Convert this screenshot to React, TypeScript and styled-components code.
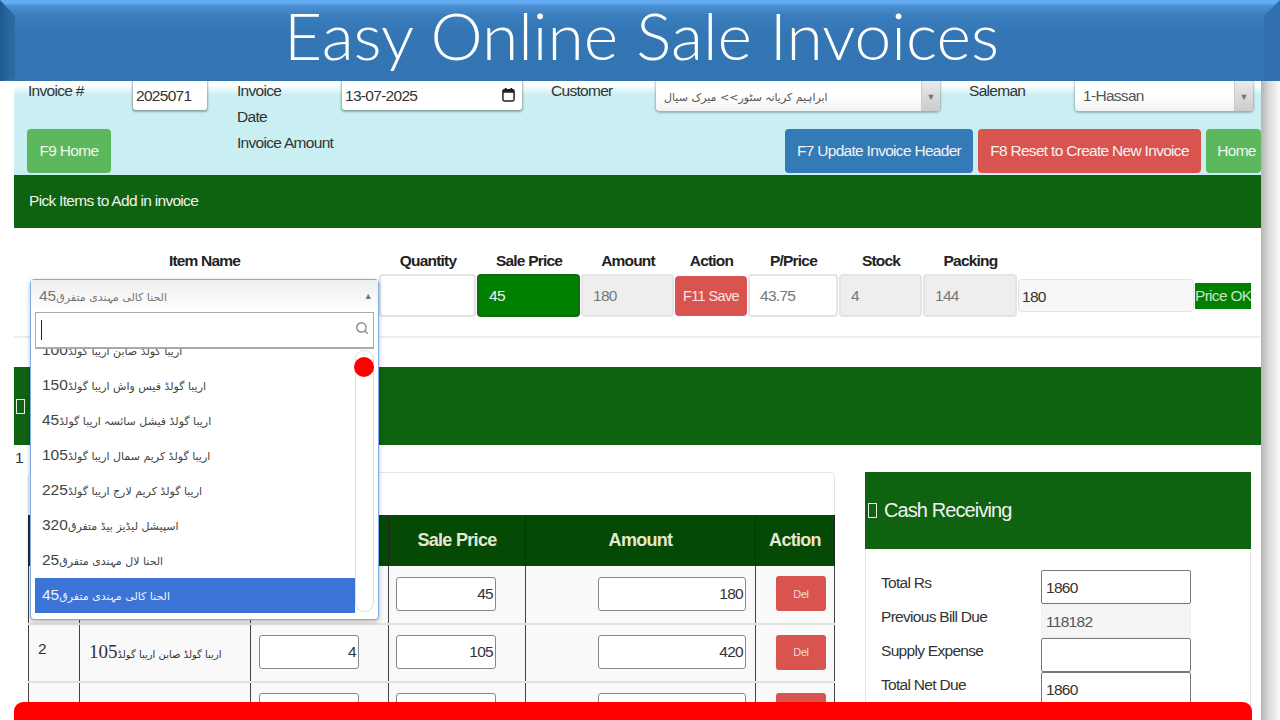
import { Search } from "lucide-react";
import { styled, createGlobalStyle } from "styled-components";

const GlobalStyle = createGlobalStyle`
  html, body {
    margin: 0;
    padding: 0;
    height: 100%;
    overflow: hidden;
    background: white;
  }
  body {
    font-family: "Liberation Sans", "DejaVu Sans", sans-serif;
    font-size: 15.5px;
    letter-spacing: -0.7px;
    color: #333;
  }
  * {
    box-sizing: border-box;
  }
`;

const Screen = styled.div`
  position: relative;
  width: 1280px;
  height: 720px;
  overflow: hidden;
`;

const Banner = styled.header`
  position: relative;
  z-index: 3;
  height: 81px;
  display: flex;
  align-items: center;
  justify-content: center;
  color: white;
  font-family: Lato, "Open Sans", sans-serif;
  font-weight: 300;
  font-size: 66px;
  line-height: 1;
  letter-spacing: 0;
  padding: 0 0 12px 3px;
  background: linear-gradient(#64aef6 0, #62abf2 3px, #4a90d2 6px, #3a7dbd 16px, #3476b4 34px, #3375b3 100%);

  &::before {
    content: "";
    position: absolute;
    left: 0;
    top: 0;
    bottom: 0;
    width: 15px;
    clip-path: polygon(0 0, 100% 16px, 100% calc(100% - 2px), 0 100%);
    background: linear-gradient(90deg, #1d5a94, #28679f 60%, #2c6ca6);
  }

  &::after {
    content: "";
    position: absolute;
    right: 0;
    top: 0;
    bottom: 0;
    width: 16px;
    clip-path: polygon(100% 0, 0 16px, 0 100%, 100% 100%);
    background: #3070ae;
  }
`;

const Shell = styled.div`
  display: flex;
  margin-top: -4px;
  margin-left: 14px;
`;

const Page = styled.main`
  width: 1247px;
  flex: none;
  overflow: hidden;
`;

const Gutter = styled.div`
  width: 19px;
  height: 650px;
  background: linear-gradient(90deg, #b4b4b4, #d8d8d8 40%, #fbfbfb);
`;

const HeaderForm = styled.section`
  display: grid;
  grid-template-columns: 105px 104px 105px 209px 105px 313px 106px 1fr;
  grid-template-rows: 52px 44px;
  height: 98px;
  padding-left: 14px;
  background: linear-gradient(#fff 5px, #fff 8px, #c9eff3 18px);
`;

const FieldLabel = styled.label`
  line-height: 26px;
  padding-top: 1px;
`;

const AmountLabel = styled(FieldLabel)`
  grid-column: 3;
`;

const TextBox = styled.div<{ $width?: number }>`
  width: ${(props) => (props.$width ? `${props.$width}px` : "100%")};
  height: 33px;
  padding: 7px 3px 0;
  background: white;
  border-radius: 3px;
  box-shadow: 0 1px 2px 1px rgba(0, 0, 0, 0.3);
  display: flex;
  justify-content: space-between;
  line-height: 24px;
`;

const CalendarMark = styled.svg`
  width: 13px;
  height: 15px;
  margin: 3px 4px 0 0;
`;

const SelectBox = styled.div<{ $width: number }>`
  width: ${(props) => props.$width}px;
  height: 34px;
  display: flex;
  background: linear-gradient(#fff 60%, #f1f1f1);
  border-radius: 4px;
  box-shadow: 0 1px 2px 1px rgba(0, 0, 0, 0.25);
  overflow: hidden;
  line-height: 38px;
`;

const SelectValue = styled.div`
  flex: 1;
  padding-left: 8px;
  color: #555;
`;

const SelectArrow = styled.div`
  width: 19px;
  display: flex;
  align-items: center;
  justify-content: center;
  padding-top: 6px;
  background: linear-gradient(#eee, #ccc);
  border-left: 1px solid #ccc;
  color: #777;
  font-size: 9px;
  letter-spacing: 0;
`;

const UrduText = styled.span`
  font-family: "DejaVu Sans", sans-serif;
  letter-spacing: 0;
  font-size: 11px;
`;

const NumberPart = styled.span`
  font-family: "Liberation Sans", sans-serif;
  font-size: 15.5px;
  letter-spacing: -0.5px;
`;

const Button = styled.button<{ $color: string; $width: number; $shift?: number }>`
  width: ${(props) => props.$width}px;
  height: 44px;
  flex: none;
  border: none;
  border-radius: 4px;
  background: ${(props) => props.$color};
  color: #f3f3f3;
  font: inherit;
  letter-spacing: inherit;
  padding: 0 0 0 ${(props) => props.$shift ?? 0}px;
`;

const HomeButton = styled(Button)`
  margin-left: -1px;
`;

const ButtonRow = styled.div`
  grid-column: 5 / -1;
  display: flex;
  justify-content: flex-end;
  gap: 5px;
`;

const GreenBar = styled.div<{ $height: number; $top?: number }>`
  height: ${(props) => props.$height}px;
  margin-top: ${(props) => props.$top ?? 0}px;
  background: #0f620f;
  color: #f2f2f2;
  display: flex;
  align-items: center;
`;

const PickTitle = styled.span`
  padding-left: 15px;
  margin-top: -2px;
`;

const MissingGlyph = styled.span<{ $left: number }>`
  display: inline-block;
  width: 9px;
  height: 15px;
  margin-left: ${(props) => props.$left}px;
  border: 1px solid #e8e8e8;
`;

const PickPanel = styled.section`
  height: 110px;
  border-bottom: 2px solid #eee;
  display: grid;
  grid-template-columns: 349px 98px 104px 94px 73px 91px 84px 95px 177px 56px;
  grid-template-rows: 46px 43px;
  padding-left: 16px;
`;

const ColumnTitle = styled.div`
  align-self: end;
  text-align: center;
  font-weight: bold;
  letter-spacing: -0.8px;
  color: #222;
  line-height: 20px;
  margin-bottom: 3px;
`;

const Field = styled.div<{ $tone?: "plain" | "muted" | "green" }>`
  height: 43px;
  margin-right: 1px;
  padding-left: 10px;
  border-radius: 4px;
  border: 2px solid #e4e4e4;
  line-height: 39px;
  color: ${(props) => (props.$tone === "green" ? "#f0f0f0" : "#777")};
  background: ${(props) =>
    props.$tone === "muted" ? "#eee" : props.$tone === "green" ? "#008000" : "white"};
  border-color: ${(props) => (props.$tone === "green" ? "#0a700a" : "#e4e4e4")};
`;

const SaveButton = styled.button`
  height: 40px;
  margin-top: 2px;
  border: none;
  border-radius: 4px;
  background: #d9534f;
  color: #f6e6e6;
  font: inherit;
  font-size: 14.5px;
  letter-spacing: -0.6px;
  padding: 0;
  margin-right: 1px;
`;

const PlainEntry = styled.div`
  height: 33px;
  margin: 5px 1px 0 0;
  padding-left: 3px;
  background: #f7f7f7;
  border: 1px solid #e2e2e2;
  border-radius: 4px;
  line-height: 33px;
  color: #333;
`;

const PriceOk = styled.div`
  height: 26px;
  margin-top: 9px;
  background: #008000;
  color: #c8e4c8;
  line-height: 26px;
  white-space: nowrap;
  overflow: hidden;
`;

const ComboCell = styled.div`
  position: relative;
`;

const Combo = styled.div`
  position: absolute;
  z-index: 2;
  top: 5px;
  left: 0;
  width: 349px;
  height: 341px;
  background: white;
  border: 1px solid #7fabe9;
  border-radius: 4px;
  box-shadow: 0 2px 5px rgba(0, 0, 0, 0.25);
`;

const ComboHead = styled.div`
  height: 32px;
  padding: 0 6px 0 8px;
  display: flex;
  justify-content: space-between;
  align-items: center;
  color: #777;
  background: linear-gradient(#eee, #fff);
  font-size: 9px;
`;

const SearchBox = styled.div`
  height: 37px;
  margin: 0 4px;
  padding: 0 4px 5px 5px;
  display: flex;
  justify-content: space-between;
  align-items: center;
  border: 1px solid #aaa;
  border-bottom-width: 2px;
  background: white;
  color: #8c8c8c;
`;

const Caret = styled.span`
  width: 1px;
  height: 20px;
  margin-top: 5px;
  background: #222;
`;

const ListArea = styled.div`
  position: relative;
  height: 265px;
  margin: 0 4px;
  display: flex;
  overflow: hidden;
`;

const OptionList = styled.ul`
  flex: 1;
  margin: -16px 0 0;
  padding: 0;
  list-style: none;
`;

const OptionRow = styled.li<{ $active?: boolean }>`
  height: 35px;
  padding: 0 0 2px 7px;
  display: flex;
  align-items: center;
  color: ${(props) => (props.$active ? "#eef2fb" : "#444")};
  background: ${(props) => (props.$active ? "#3b74d6" : "transparent")};
`;

const ScrollTrack = styled.div`
  position: relative;
  width: 19px;
  height: 262px;
  margin-top: 1px;
  border: 1px solid #ddd;
  border-radius: 9px;
  background: white;
`;

const ScrollDot = styled.span`
  position: absolute;
  top: 6px;
  left: -2px;
  width: 20px;
  height: 20px;
  border-radius: 50%;
  background: #f00;
`;

const LineCount = styled.div`
  height: 27px;
  line-height: 26px;
  padding-left: 1px;
  color: #333;
`;

const Columns = styled.section`
  display: grid;
  grid-template-columns: 807px 386px;
  gap: 30px;
  padding-left: 14px;
`;

const TableCard = styled.div`
  padding-top: 42px;
  border: 1px solid #e4e4e4;
  border-bottom: none;
  border-radius: 5px 5px 0 0;
`;

const ItemsTable = styled.table`
  width: 806px;
  margin: 0 -1px;
  table-layout: fixed;
  border-collapse: collapse;
`;

const HeadCell = styled.th<{ $width: number }>`
  width: ${(props) => props.$width}px;
  height: 51px;
  background: #044a04;
  color: #e6e6d2;
  font-size: 18px;
  letter-spacing: -0.7px;
  border-left: 1px solid #222;
  border-right: 1px solid #222;
`;

const BodyRow = styled.tr`
  height: 58px;
  background: #f9f9f9;
  border-bottom: 2px solid #e2e2e2;
`;

const BodyCell = styled.td`
  padding: 0 0 2px;
  vertical-align: middle;
  border-left: 1px solid #444;
  border-right: 1px solid #444;
`;

const IndexCell = styled(BodyCell)`
  padding: 0 0 8px 9px;
`;

const NameCell = styled(BodyCell)`
  padding-left: 9px;
  font-family: "Liberation Serif", "DejaVu Serif", serif;
  font-size: 19px;
  letter-spacing: 0;
`;

const NameUrdu = styled.span`
  font-family: "DejaVu Sans", sans-serif;
  font-size: 10px;
`;

const NumberBox = styled.div<{ $width: number; $left: number }>`
  width: ${(props) => props.$width}px;
  height: 34px;
  margin-left: ${(props) => props.$left}px;
  padding: 0 2px 0 0;
  background: white;
  border: 1px solid #888;
  border-radius: 3px;
  text-align: right;
  line-height: 32px;
`;

const DelButton = styled.button`
  display: block;
  width: 50px;
  height: 35px;
  margin: 0 0 0 20px;
  padding: 0;
  border: none;
  border-radius: 3px;
  background: #d9534f;
  color: #f3dada;
  font-size: 11px;
  letter-spacing: -0.4px;
`;

const CashCard = styled.aside`
  border: 1px solid #e4e4e4;
  border-radius: 4px 4px 0 0;
`;

const CashHead = styled(GreenBar)`
  font-size: 20px;
  letter-spacing: -0.9px;
  margin: -1px;
`;

const CashGlyph = styled(MissingGlyph)`
  margin-right: 7px;
`;

const CashBody = styled.div`
  display: grid;
  grid-template-columns: 160px 150px;
  grid-auto-rows: 34px;
  padding: 22px 0 0 15px;
`;

const CashLabel = styled.div`
  line-height: 26px;
`;

const CashEntry = styled.div<{ $locked?: boolean }>`
  height: 34px;
  padding-left: 4px;
  line-height: 34px;
  border-radius: 2px;
  background: ${(props) => (props.$locked ? "#f5f5f5" : "white")};
  border: 1px solid ${(props) => (props.$locked ? "#f0f0f0" : "#777")};
  color: ${(props) => (props.$locked ? "#555" : "#333")};
`;

const RedBar = styled.div`
  position: absolute;
  z-index: 4;
  left: 14px;
  bottom: -8px;
  width: 1238px;
  height: 26px;
  border-radius: 9px;
  background: #f00;
`;

const options = [
  { name: "اریبا گولڈ صابن اریبا گولڈ", price: "100" },
  { name: "اریبا گولڈ فیس واش اریبا گولڈ", price: "150" },
  { name: "اریبا گولڈ فیشل سائسہ اریبا گولڈ", price: "45" },
  { name: "اریبا گولڈ کریم سمال اریبا گولڈ", price: "105" },
  { name: "اریبا گولڈ کریم لارج اریبا گولڈ", price: "225" },
  { name: "اسپیشل لیڈیز بیڈ متفرق", price: "320" },
  { name: "الحنا لال مہندی متفرق", price: "25" },
  { name: "الحنا کالی مہندی متفرق", price: "45", active: true },
];

const rows = [
  { no: "1", name: "الحنا کالی مہندی متفرق", price: "45", qty: "4", sale: "45", amount: "180" },
  { no: "2", name: "اریبا گولڈ صابن اریبا گولڈ", price: "105", qty: "4", sale: "105", amount: "420" },
  { no: "3", name: "اریبا گولڈ کریم سمال", price: "105", qty: "4", sale: "105", amount: "420" },
];

const CalendarIcon = () => (
  <CalendarMark viewBox="0 0 14 16">
    <rect x="1" y="3" width="12" height="12" rx="1.5" fill="none" stroke="#222" strokeWidth="1.6" />
    <path d="M1 3h12v3H1zM3 1h2v3H3zM9 1h2v3H9z" fill="#222" />
  </CalendarMark>
);

export default function App() {
  return (
    <>
      <GlobalStyle />
      <Screen>
        <Banner>Easy Online Sale Invoices</Banner>
        <Shell>
          <Page>
            <HeaderForm>
              <FieldLabel>Invoice #</FieldLabel>
              <div>
                <TextBox $width={74}>2025071</TextBox>
              </div>
              <FieldLabel>
                Invoice
                <br />
                Date
              </FieldLabel>
              <div>
                <TextBox $width={180}>
                  13-07-2025
                  <CalendarIcon />
                </TextBox>
              </div>
              <FieldLabel>Customer</FieldLabel>
              <SelectBox $width={284}>
                <SelectValue>
                  <UrduText>ابراہیم کریانہ سٹور&gt;&gt; میرک سیال</UrduText>
                </SelectValue>
                <SelectArrow>▼</SelectArrow>
              </SelectBox>
              <FieldLabel>Saleman</FieldLabel>
              <SelectBox $width={178}>
                <SelectValue>1-Hassan</SelectValue>
                <SelectArrow>▼</SelectArrow>
              </SelectBox>
              <HomeButton $color="#5cb85c" $width={84}>F9 Home</HomeButton>
              <AmountLabel>Invoice Amount</AmountLabel>
              <ButtonRow>
                <Button $color="#337ab7" $width={188}>F7 Update Invoice Header</Button>
                <Button $color="#d9534f" $width={223}>F8 Reset to Create New Invoice</Button>
                <Button $color="#5cb85c" $width={55} $shift={6}>Home</Button>
              </ButtonRow>
            </HeaderForm>

            <GreenBar $height={53}>
              <PickTitle>Pick Items to Add in invoice</PickTitle>
            </GreenBar>

            <PickPanel>
              <ColumnTitle>Item Name</ColumnTitle>
              <ColumnTitle>Quantity</ColumnTitle>
              <ColumnTitle>Sale Price</ColumnTitle>
              <ColumnTitle>Amount</ColumnTitle>
              <ColumnTitle>Action</ColumnTitle>
              <ColumnTitle>P/Price</ColumnTitle>
              <ColumnTitle>Stock</ColumnTitle>
              <ColumnTitle>Packing</ColumnTitle>
              <div />
              <div />
              <ComboCell>
                <Combo>
                  <ComboHead>
                    <span>
                      <UrduText>الحنا کالی مہندی متفرق</UrduText>
                      <NumberPart>45</NumberPart>
                    </span>
                    <span>▲</span>
                  </ComboHead>
                  <SearchBox>
                    <Caret />
                    <Search size={14} strokeWidth={2.5} />
                  </SearchBox>
                  <ListArea>
                    <OptionList>
                      {options.map((option) => (
                        <OptionRow key={option.name + option.price} $active={option.active}>
                          <span>
                            <UrduText>{option.name}</UrduText>
                            <NumberPart>{option.price}</NumberPart>
                          </span>
                        </OptionRow>
                      ))}
                    </OptionList>
                    <ScrollTrack>
                      <ScrollDot />
                    </ScrollTrack>
                  </ListArea>
                </Combo>
              </ComboCell>
              <Field />
              <Field $tone="green">45</Field>
              <Field $tone="muted">180</Field>
              <SaveButton>F11 Save</SaveButton>
              <Field>43.75</Field>
              <Field $tone="muted">4</Field>
              <Field $tone="muted">144</Field>
              <PlainEntry>180</PlainEntry>
              <PriceOk>Price OK</PriceOk>
            </PickPanel>

            <GreenBar $height={78} $top={29}>
              <MissingGlyph $left={2} />
            </GreenBar>
            <LineCount>1</LineCount>

            <Columns>
              <TableCard>
                <ItemsTable>
                  <thead>
                    <tr>
                      <HeadCell $width={51}>#</HeadCell>
                      <HeadCell $width={171}>Item</HeadCell>
                      <HeadCell $width={138}>Quantity</HeadCell>
                      <HeadCell $width={137}>Sale Price</HeadCell>
                      <HeadCell $width={230}>Amount</HeadCell>
                      <HeadCell $width={79}>Action</HeadCell>
                    </tr>
                  </thead>
                  <tbody>
                    {rows.map((row) => (
                      <BodyRow key={row.no}>
                        <IndexCell>{row.no}</IndexCell>
                        <NameCell>
                          <NameUrdu>{row.name}</NameUrdu>
                          {row.price}
                        </NameCell>
                        <BodyCell>
                          <NumberBox $width={100} $left={8}>{row.qty}</NumberBox>
                        </BodyCell>
                        <BodyCell>
                          <NumberBox $width={100} $left={7}>{row.sale}</NumberBox>
                        </BodyCell>
                        <BodyCell>
                          <NumberBox $width={148} $left={72}>{row.amount}</NumberBox>
                        </BodyCell>
                        <BodyCell>
                          <DelButton>Del</DelButton>
                        </BodyCell>
                      </BodyRow>
                    ))}
                  </tbody>
                </ItemsTable>
              </TableCard>

              <CashCard>
                <CashHead $height={77}>
                  <CashGlyph $left={3} />
                  Cash Receiving
                </CashHead>
                <CashBody>
                  <CashLabel>Total Rs</CashLabel>
                  <CashEntry>1860</CashEntry>
                  <CashLabel>Previous Bill Due</CashLabel>
                  <CashEntry $locked>118182</CashEntry>
                  <CashLabel>Supply Expense</CashLabel>
                  <CashEntry />
                  <CashLabel>Total Net Due</CashLabel>
                  <CashEntry>1860</CashEntry>
                </CashBody>
              </CashCard>
            </Columns>
          </Page>
          <Gutter />
        </Shell>
        <RedBar />
      </Screen>
    </>
  );
}
